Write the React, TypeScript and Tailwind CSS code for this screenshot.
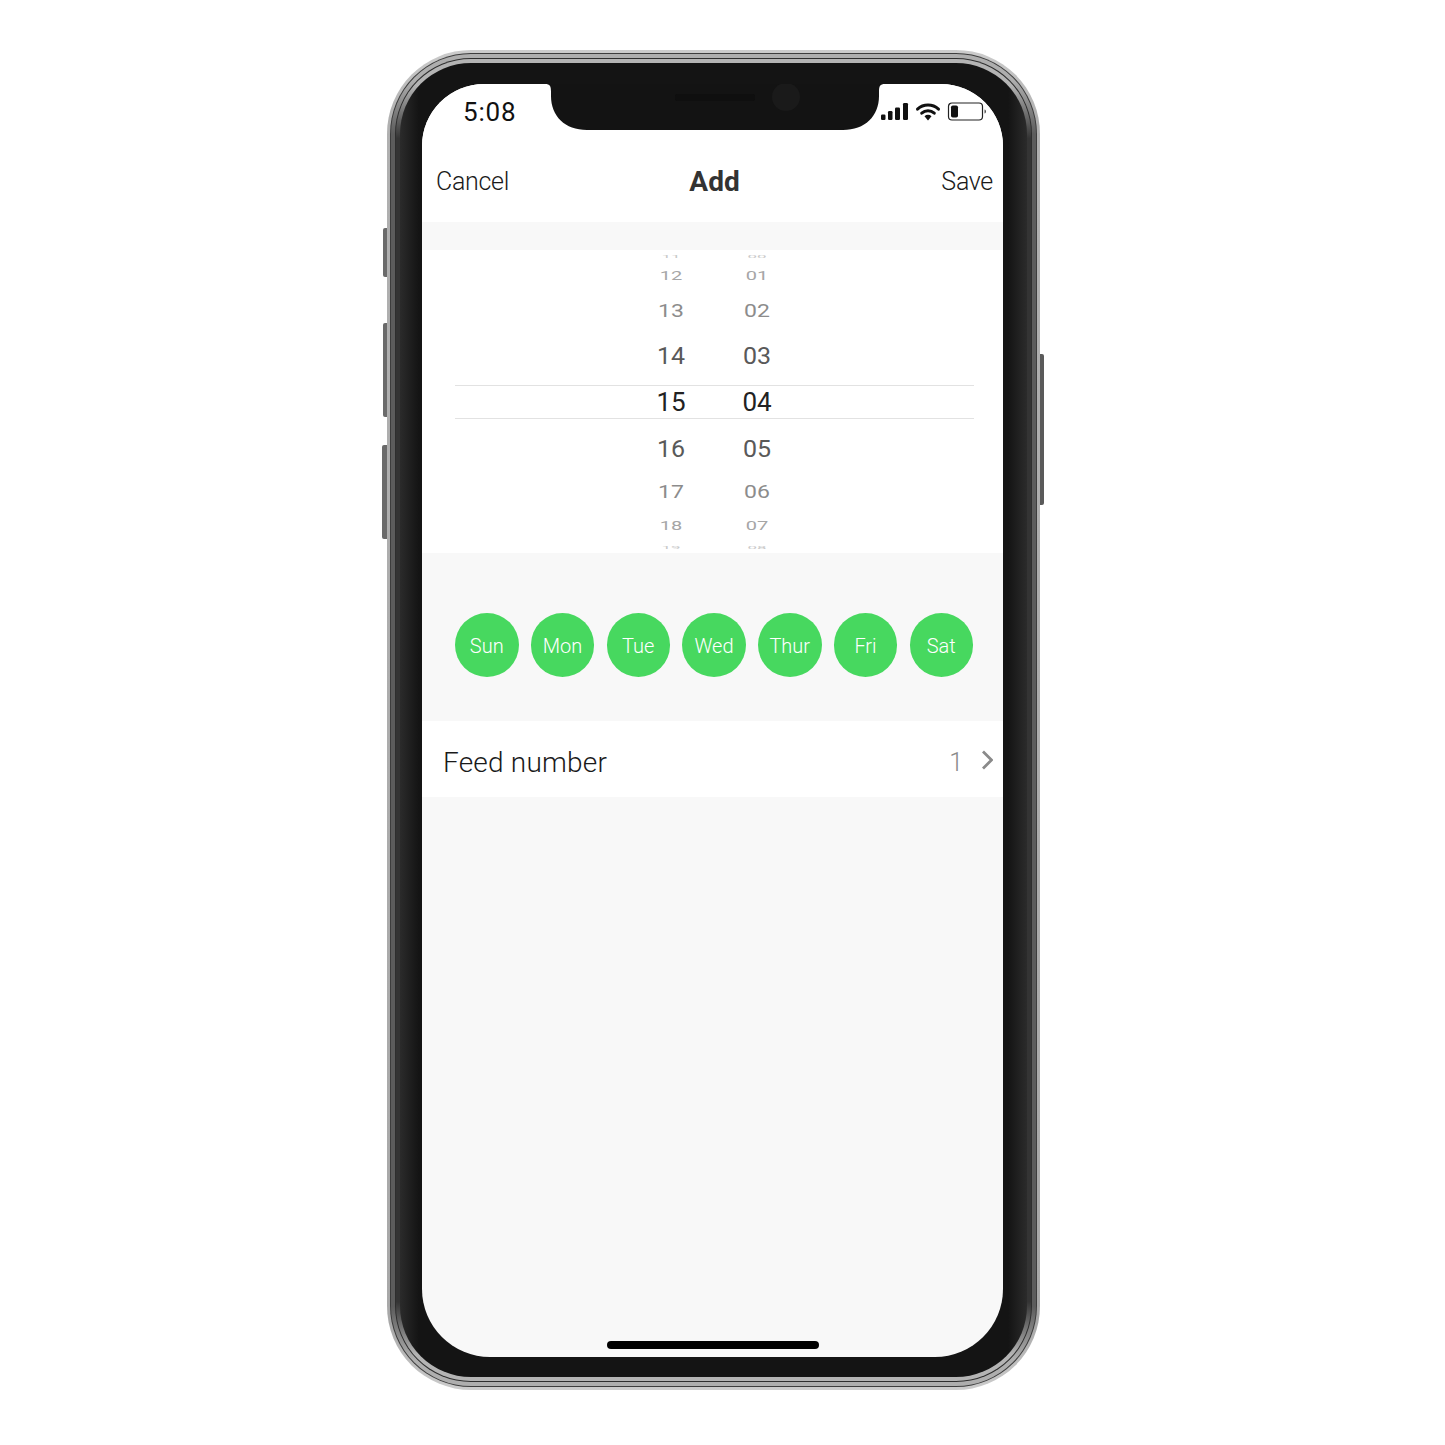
const hours = [
  { h: '11', m: '00', height: 'h-[12px]', squash: 'scale-y-[0.2]', color: 'text-[#c8c8c8]', size: 'text-[17px]' },
  { h: '12', m: '01', height: 'h-[28px]', squash: 'scale-y-[0.6]', color: 'text-[#a6a6a6]', size: 'text-[20px]' },
  { h: '13', m: '02', height: 'h-[42px]', squash: 'scale-y-[0.8]', color: 'text-[#8c8c8c]', size: 'text-[23px]' },
  { h: '14', m: '03', height: 'h-[46px]', squash: 'scale-y-[0.95]', color: 'text-[#595959]', size: 'text-[25px]' },
  { h: '15', m: '04', height: 'h-[48px]', squash: 'scale-y-100', color: 'text-[#222222]', size: 'text-[26px]' },
  { h: '16', m: '05', height: 'h-[44px]', squash: 'scale-y-[0.95]', color: 'text-[#595959]', size: 'text-[25px]' },
  { h: '17', m: '06', height: 'h-[44px]', squash: 'scale-y-[0.8]', color: 'text-[#8c8c8c]', size: 'text-[23px]' },
  { h: '18', m: '07', height: 'h-[24px]', squash: 'scale-y-[0.6]', color: 'text-[#a6a6a6]', size: 'text-[20px]' },
  { h: '19', m: '08', height: 'h-[18px]', squash: 'scale-y-[0.2]', color: 'text-[#c8c8c8]', size: 'text-[17px]' },
]

const days = ['Sun', 'Mon', 'Tue', 'Wed', 'Thur', 'Fri', 'Sat']

function StatusIcons() {
  return (
    <svg width="106" height="20" viewBox="0 0 106 20" className="absolute left-[458px] top-[18px]">
      <rect x="1" y="12.5" width="4.5" height="5.5" rx="1.2" fill="#111" />
      <rect x="8" y="9" width="4.5" height="9" rx="1.2" fill="#111" />
      <rect x="15" y="5.5" width="5" height="12.5" rx="1.2" fill="#111" />
      <rect x="23" y="1" width="5" height="17" rx="1.2" fill="#111" />
      <path d="M37.5 7.2a15.5 15.5 0 0 1 21 0" fill="none" stroke="#111" strokeWidth="3" strokeLinecap="round" />
      <path d="M41.7 11.2a9.5 9.5 0 0 1 12.6 0" fill="none" stroke="#111" strokeWidth="3" strokeLinecap="round" />
      <path d="M44.5 14.2a5 5 0 0 1 7 0L48 18.5z" fill="#111" />
      <rect x="68.5" y="1" width="34" height="17" rx="3.5" fill="none" stroke="#222" strokeWidth="1.2" />
      <rect x="71" y="3.5" width="7" height="12" rx="1.8" fill="#111" />
      <path d="M104.5 7.5c1 .4 1.5 1.1 1.5 2s-.5 1.6-1.5 2z" fill="#555" />
    </svg>
  )
}

function Notch() {
  return (
    <svg width="340" height="47" viewBox="0 0 340 47" className="absolute left-[123px] top-0">
      <path
        d="M0 0H340C335 0 334 2 334 8V12C334 32 320 46 298 46H42C20 46 6 32 6 12V8C6 2 5 0 0 0Z"
        fill="#131313"
      />
      <circle cx="241" cy="13" r="14" fill="#1a1a1a" />
      <rect x="130" y="10" width="80" height="7" rx="2" fill="#0f0f0f" />
    </svg>
  )
}

function Picker() {
  return (
    <div className="relative h-[303px] overflow-hidden bg-white">
      <div className="flex flex-col">
        {hours.map((row) => (
          <div key={row.h} className={`flex shrink-0 items-center ${row.height}`}>
            <div className="flex w-full justify-start pl-[219px]">
              <span className={`w-[60px] text-center leading-none ${row.size} ${row.color} ${row.squash}`}>{row.h}</span>
              <span className={`ml-[26px] w-[60px] text-center leading-none ${row.size} ${row.color} ${row.squash}`}>{row.m}</span>
            </div>
          </div>
        ))}
      </div>
      <div className="absolute left-[33px] top-[135px] h-[34px] w-[519px] border-y border-[#e2e2e2]" />
    </div>
  )
}

export default function App() {
  return (
    <div className="h-[1445px] w-[1445px] bg-white pl-[387px] pt-[50px] font-['Roboto',sans-serif]">
      <div className="relative h-[1340px] w-[653px]">
        <div className="absolute left-[-4px] top-[178px] h-[49px] w-[5px] rounded-l-[2px] bg-[#6a6a6a]" />
        <div className="absolute left-[-4px] top-[273px] h-[94px] w-[5px] rounded-l-[2px] bg-[#6a6a6a]" />
        <div className="absolute left-[-5px] top-[395px] h-[94px] w-[6px] rounded-l-[2px] bg-[#6a6a6a]" />
        <div className="absolute right-[-4px] top-[304px] h-[151px] w-[5px] rounded-r-[2px] bg-[#5a5a5a]" />

        <div className="relative h-full w-full rounded-[84px] bg-[linear-gradient(180deg,#cccccc_0,#b0b0b0_5%,#a8a8a8_95%,#cccccc_100%)] p-[3px]">
          <div className="h-full w-full rounded-[81px] bg-[#3d3d3d] p-px">
            <div className="h-full w-full rounded-[80px] bg-[linear-gradient(180deg,#aeaeae_0,#aeaeae_2%,#5c5c5c_6%,#5c5c5c_94%,#aeaeae_98%,#aeaeae_100%)] p-1">
              <div className="h-full w-full rounded-[76px] bg-[#2e2e2e] p-px">
                <div className="h-full w-full rounded-[75px] bg-[linear-gradient(180deg,#b4b4b4_0,#b4b4b4_2%,#343434_6%,#343434_94%,#b4b4b4_98%,#b4b4b4_100%)] p-1">
                  <div className="h-full w-full rounded-[71px] bg-[linear-gradient(90deg,#2b2b2b_0,#141414_3%,#141414_97%,#2b2b2b_100%)] pb-[20px] pl-[22px] pr-[24px] pt-[21px]">
                    <div className="relative flex h-full w-full flex-col overflow-hidden rounded-b-[68px] rounded-t-[62px] bg-[#f8f8f8] text-[#333333]">
                      <div className="h-[56px] shrink-0 bg-white pl-[41px] pt-[13px] text-[26px] leading-[30px] tracking-[0.8px] text-[#111111]">5:08</div>
                      <div className="grid h-[82px] shrink-0 grid-cols-[1fr_auto_1fr] items-start bg-white pl-[14px] pr-[10px] pt-[26px] text-[25px] font-light leading-[32px] tracking-[-0.3px] text-[#1a1a1a]">
                        <span>Cancel</span>
                        <span className="text-[28px] font-bold tracking-normal text-[#333333]">Add</span>
                        <span className="text-right">Save</span>
                      </div>
                      <div className="h-[28px] shrink-0" />
                      <Picker />
                      <div className="flex h-[168px] shrink-0 justify-between pl-[33px] pr-[30px] pt-[60px]">
                        {days.map((d) => (
                          <div key={d} className="flex h-[64px] w-[63.5px] items-center justify-center rounded-full bg-[#47d85f] pt-[2px] text-[20px] font-light text-white">
                            {d}
                          </div>
                        ))}
                      </div>
                      <div className="flex h-[76px] shrink-0 items-center bg-white pl-[21px] pr-[10px] pt-[8px]">
                        <span className="text-[28px] font-light tracking-[0.2px] text-[#1a1a1a]">Feed number</span>
                        <span className="ml-auto text-[25px] font-light text-[#8a8a8a]">1</span>
                        <svg width="12" height="20" viewBox="0 0 12 20" className="mb-[6px] ml-[18px]">
                          <path d="M2 1.5 10.5 10 2 18.5" fill="none" stroke="#8a8a8a" strokeWidth="2.8" />
                        </svg>
                      </div>
                      <div className="flex-1" />
                      <div className="absolute bottom-[8px] left-[185px] h-[8px] w-[212px] rounded-full bg-black" />
                      <Notch />
                      <StatusIcons />
                    </div>
                  </div>
                </div>
              </div>
            </div>
          </div>
        </div>
      </div>
    </div>
  )
}
